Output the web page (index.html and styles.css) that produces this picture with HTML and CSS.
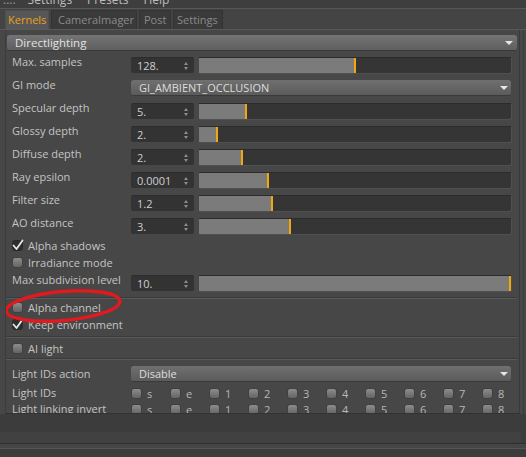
FILE: index.html
```
<!DOCTYPE html>
<html>
<head>
<meta charset="utf-8">
<link rel="stylesheet" href="styles.css">
</head>
<body>
<div class="menubar">
  <span class="grip">::::</span><span class="menu">Settings</span><span class="menu">Presets</span><span class="menu">Help</span>
</div>
<div class="tabs">
  <div class="tab active t1">Kernels</div>
  <div class="tab t2">CameraImager</div>
  <div class="tab t3">Post</div>
  <div class="tab t4">Settings</div>
</div>
<div class="main">
  <div class="panel">
    <div class="group-head"><span>Directlighting</span><span class="arrow"></span></div>

    <div class="row"><div class="lbl">Max. samples</div><div class="num">128.<span class="spin"></span></div><div class="slider"><div class="fill" style="width:157px"></div></div></div>
    <div class="row"><div class="lbl">GI mode</div><div class="drop"><span>GI_AMBIENT_OCCLUSION</span><span class="arrow"></span></div></div>
    <div class="row"><div class="lbl">Specular depth</div><div class="num">5.<span class="spin"></span></div><div class="slider"><div class="fill" style="width:48px"></div></div></div>
    <div class="row"><div class="lbl">Glossy depth</div><div class="num">2.<span class="spin"></span></div><div class="slider"><div class="fill" style="width:19px"></div></div></div>
    <div class="row"><div class="lbl">Diffuse depth</div><div class="num">2.<span class="spin"></span></div><div class="slider"><div class="fill" style="width:44px"></div></div></div>
    <div class="row"><div class="lbl">Ray epsilon</div><div class="num">0.0001<span class="spin"></span></div><div class="slider"><div class="fill" style="width:70px"></div></div></div>
    <div class="row"><div class="lbl">Filter size</div><div class="num">1.2<span class="spin"></span></div><div class="slider"><div class="fill" style="width:74px"></div></div></div>
    <div class="row last"><div class="lbl">AO distance</div><div class="num">3.<span class="spin"></span></div><div class="slider"><div class="fill" style="width:92px"></div></div></div>

    <div class="check"><span class="box on"><svg width="12" height="12" viewBox="0 0 12 12"><path d="M1.5 6.5 L4.5 10 L10.5 1.5" fill="none" stroke="#e6e6e6" stroke-width="1.8" stroke-linecap="round" stroke-linejoin="round"/></svg></span>Alpha shadows</div>
    <div class="check"><span class="box"></span>Irradiance mode</div>

    <div class="row sub"><div class="lbl">Max subdivision level</div><div class="num">10.<span class="spin"></span></div><div class="slider"><div class="fill" style="width:312px"></div></div></div>

    <div class="sep s1"></div>
    <div class="check"><span class="box"></span>Alpha channel</div>
    <div class="check"><span class="box on"><svg width="12" height="12" viewBox="0 0 12 12"><path d="M1.5 6.5 L4.5 10 L10.5 1.5" fill="none" stroke="#e6e6e6" stroke-width="1.8" stroke-linecap="round" stroke-linejoin="round"/></svg></span>Keep environment</div>
    <div class="sep s2"></div>
    <div class="check"><span class="box"></span>AI light</div>
    <div class="sep s3"></div>

    <div class="row ids-action"><div class="lbl">Light IDs action</div><div class="drop"><span>Disable</span><span class="arrow"></span></div></div>
    <div class="idrow"><div class="lbl">Light IDs</div>
      <div class="ids">
        <span class="id"><span class="box"></span>s</span><span class="id"><span class="box"></span>e</span><span class="id"><span class="box"></span>1</span><span class="id"><span class="box"></span>2</span><span class="id"><span class="box"></span>3</span><span class="id"><span class="box"></span>4</span><span class="id"><span class="box"></span>5</span><span class="id"><span class="box"></span>6</span><span class="id"><span class="box"></span>7</span><span class="id"><span class="box"></span>8</span>
      </div>
    </div>
    <div class="idrow"><div class="lbl">Light linking invert</div>
      <div class="ids">
        <span class="id"><span class="box"></span>s</span><span class="id"><span class="box"></span>e</span><span class="id"><span class="box"></span>1</span><span class="id"><span class="box"></span>2</span><span class="id"><span class="box"></span>3</span><span class="id"><span class="box"></span>4</span><span class="id"><span class="box"></span>5</span><span class="id"><span class="box"></span>6</span><span class="id"><span class="box"></span>7</span><span class="id"><span class="box"></span>8</span>
      </div>
    </div>

    <svg class="mark" width="130" height="40" viewBox="0 0 130 40"><ellipse cx="61" cy="20" rx="57" ry="14.5" transform="rotate(-5 61 20)" fill="none" stroke="#e01a1e" stroke-width="3.4"/></svg>
  </div>
  <div class="scroll"></div>
</div>
<div class="footer">
  <div class="f1"></div>
  <div class="f2"></div>
  <div class="f3"></div>
</div>
</body>
</html>
```
FILE: styles.css
```
* { box-sizing: border-box; }
html, body { margin: 0; padding: 0; }
body {
  width: 526px;
  height: 457px;
  overflow: hidden;
  background: #474747;
  font-family: "Open Sans", "Noto Sans", sans-serif;
  font-size: 11px;
  color: #c4c4c4;
}
.menubar {
  height: 9px;
  overflow: hidden;
  background: #3e3e3e;
  border-bottom: 1px solid #575757;
  display: flex;
  align-items: flex-end;
  padding-left: 3px;
  color: #bcbcbc;
  font-size: 12px;
}
.menubar span { line-height: 14px; margin-bottom: 1px; }
.menubar .grip { margin-right: 12px; letter-spacing: 0px; color: #9a9a9a; }
.menubar .menu { margin-right: 15px; }
.tabs {
  height: 21px;
  background: #444;
  border-bottom: 1px solid #585858;
  display: flex;
  padding-left: 5px;
  padding-top: 1px;
  gap: 2px;
}
.tab {
  height: 19px;
  line-height: 18px;
  padding-left: 6px;
  background: #3a3a3a;
  border: 1px solid #333;
  border-bottom: none;
  color: #8a8a8a;
  font-size: 11px;
  white-space: nowrap;
  overflow: hidden;
}
.t1 { width: 44px; padding-left: 2px; }
.t2 { width: 86px; }
.t3 { width: 32px; padding-left: 4px; }
.t4 { width: 50px; padding-left: 3px; }
.tab.active { background: #575757; color: #eaa21c; border-color: #4e4e4e; }
.main { display: flex; height: 384px; }
.panel {
  position: relative;
  margin-left: 5px;
  width: 515px;
  border-left: 1px solid #3c3c3c;
  border-right: 1px solid #393939;
  border-bottom: 1px solid #333;
  padding: 5px 8px 0 6px;
  overflow: hidden;
}
.scroll { width: 4px; border-right: 1px solid #3a3a3a; }
.group-head {
  height: 16px;
  margin: 0 -6px 6px -5px;
  border-radius: 3px;
  background: linear-gradient(#747474, #5f5f5f);
  border-bottom: 1px solid #3a3a3a;
  display: flex;
  align-items: center;
  justify-content: space-between;
  padding: 0 4px 0 8px;
  color: #e2e2e2;
  font-size: 11.5px;
}
.arrow {
  width: 0; height: 0;
  border-left: 4px solid transparent;
  border-right: 4px solid transparent;
  border-top: 4px solid #e6e6e6;
}
.row { display: flex; height: 16px; margin-bottom: 7px; align-items: center; }
.row.last { margin-bottom: 3px; }
.lbl { width: 119px; flex: none; line-height: 14px; }
.row .lbl { margin-top: -6px; }
.num {
  width: 63px; height: 16px; flex: none;
  background: #333;
  border-radius: 2px;
  border-top: 1px solid #2c2c2c;
  position: relative;
  padding-left: 6px;
  line-height: 16px;
  color: #cfcfcf;
}
.spin {
  position: absolute; right: 6px; top: 4px;
  width: 0; height: 0;
  border-left: 2px solid transparent; border-right: 2px solid transparent;
  border-bottom: 3px solid #8e8e8e;
}
.spin::after {
  content: ""; position: absolute; left: -2px; top: 5px;
  border-left: 2px solid transparent; border-right: 2px solid transparent;
  border-top: 3px solid #8e8e8e;
}
.slider {
  margin-left: 5px;
  width: 312px; height: 16px;
  background: #353535;
  border-top: 1px solid #2b2b2b;
  border-radius: 0 0 2px 0;
  box-shadow: 1px 1px 0 #505050;
  display: flex;
}
.fill { height: 100%; background: #7b7b7b; border-right: 2px solid #f2a70f; }
.drop {
  width: 380px; height: 16px;
  border-radius: 3px;
  background: linear-gradient(#707070, #5b5b5b);
  border-bottom: 1px solid #3a3a3a;
  display: flex; align-items: center; justify-content: space-between;
  padding: 0 3px 0 8px;
  color: #dedede;
}
.check { height: 17px; display: flex; align-items: center; line-height: 14px; }
.box {
  width: 11px; height: 11px; flex: none;
  border-radius: 3px;
  background: linear-gradient(#8c8c8c, #646464);
  border: 1px solid #404040;
  margin-right: 5px;
  position: relative;
}
.box.on { background: #2e2e2e; border-color: #2a2a2a; }
.box svg { position: absolute; left: -1px; top: -2px; }
.row.sub { margin-top: 4px; margin-bottom: 0; }
.sep { height: 2px; border-top: 1px solid #3a3a3a; background: #5a5a5a; margin-right: -6px; margin-left: -6px; }
.s1 { margin-top: 6px; }
.s2 { margin-top: 3px; margin-bottom: 2px; }
.s3 { margin-top: 1px; margin-bottom: 6px; }
.ids-action { margin-bottom: 3px; }
.ids-action .lbl { margin-top: 0; }
.idrow { display: flex; height: 16px; align-items: center; }
.ids { display: flex; }
.id { width: 39px; display: flex; align-items: center; color: #b8b8b8; }
.mark { position: absolute; left: -4px; top: 256px; }
.footer { height: 43px; background: #3c3c3c; }
.f1 { height: 18px; }
.f2 { height: 11px; width: 521px; border-radius: 0 4px 4px 0; background: #414141; }
.f3 { height: 6px; border-top: 1px solid #2e2e2e; border-bottom: 1px solid #565656; background: #454545; }
```
